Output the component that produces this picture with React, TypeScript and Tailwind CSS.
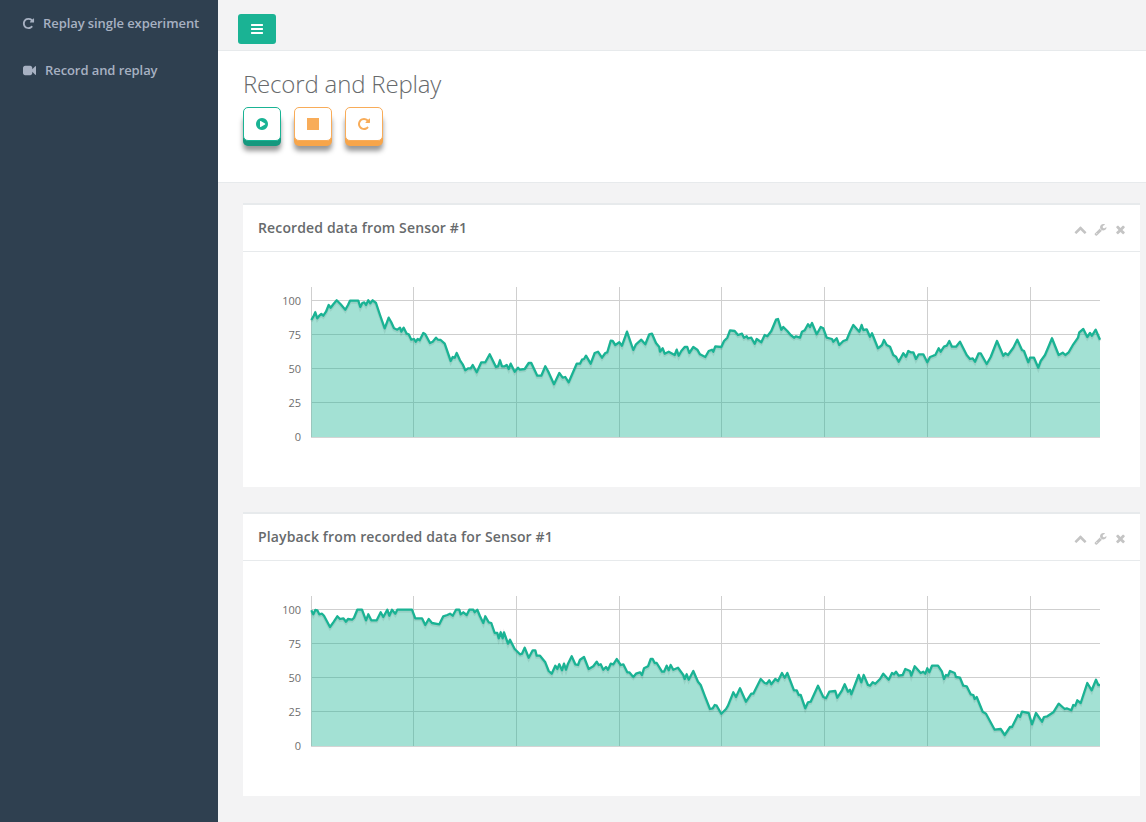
import type { ReactNode } from "react";

type Seg = { ox: number; oy: number; p: number[] };

const seg1: Seg[] = [
  { ox: 300, oy: 285, p: [34,105,40,95,46,82,52,100,58,92,64,87,70,92,78,80,86,60,92,68,100,58,110,46,122,58,136,74,144,60,150,47,175,47,181,66,187,54,193,52,198,60,205,46,211,55,218,46,228,54,240,90,254,130,266,98,274,112,282,130,292,134,300,128,304,140,311,128,320,146,326,148,334,164,342,162,347,170,353,162,359,166,370,144,376,148,390,174,398,170,408,158,414,164,422,165,434,176,452,228,458,216,464,218,470,204,480,226,488,238,496,256,504,250,512,250,518,240,530,262,544,232,556,232,569,208,588,246,594,244,600,226,606,244,614,244,620,240,626,252,632,236,644,260,654,248,660,254,674,252,686,234,694,234,712,272,724,272,736,244,744,258,762,298,778,264,788,278,796,276,806,292,830,236,840,236] },
  { ox: 570, oy: 285, p: [36,224,42,222,48,212,62,236,74,204,84,200,96,218,106,204,112,202,122,167,128,168,136,180,148,172,156,182,171,140,190,195,198,178,214,164,226,178,238,148,246,146,258,174,268,186,270,200,278,190,284,206,296,200,314,210,320,194,326,212,334,198,344,186,352,186,358,204,370,186,382,194,390,208,406,216,416,198,426,194,430,200,436,184,454,186,462,168,472,158,480,136,494,138,504,150,516,146,522,158,530,154,534,160,544,158,554,176,560,162,574,172,584,150,592,154,604,138,618,104,624,102,634,134,640,126,652,138,662,150,672,158,678,154,690,158,696,140,704,136,714,118,720,126,726,114,740,148,752,126,760,130,770,158,786,162,790,170,800,160,808,180,820,168,830,164,840,140] },
  { ox: 840, oy: 205, p: [40,360,58,380,65,360,70,375,80,373,90,395,96,385,114,430,126,420,132,405,140,420,150,425,160,450,168,455,176,470,190,445,198,455,205,438,212,442,220,442,228,462,236,448,250,448,262,472,270,456,280,452,286,450,296,430,302,440,312,425,320,422,328,408,336,425,348,425,360,410,380,450,390,462,398,460,405,470,416,445,422,445,440,477,452,456,471,408,490,452,496,445,504,450,520,428,532,404,546,435,552,438,565,472,570,458,582,458,595,488,602,468,615,450,626,424,636,400,656,450,668,443,676,450,686,442,700,418,714,398,718,382,730,372,742,396,750,384,756,392,767,374,780,404] },
];

const seg2: Seg[] = [
  { ox: 300, oy: 595, p: [34,46,40,58,46,45,52,46,58,58,66,56,72,62,90,96,100,82,112,64,120,72,130,70,138,80,144,72,156,74,162,68,172,44,186,44,198,76,205,58,214,76,230,76,242,52,250,66,262,44,268,62,276,44,286,56,292,44,336,44,346,70,366,70,376,90,386,72,396,84,418,88,430,64,442,60,450,56,458,62,468,44,478,44,482,58,490,52,500,60,508,44,520,44,524,52,532,44,540,64,550,84,556,64,566,82,574,84,584,114,592,114,596,130,602,112,608,130,612,112,624,146,630,134,644,162,660,178,666,176,674,158,686,188,698,166,706,166,710,182,720,182,736,202,746,228,755,236,766,212,772,222,778,208,786,226,792,206,798,224,804,206,815,184,826,208,834,210,840,194] },
  { ox: 570, oy: 595, p: [42,186,56,222,70,214,80,200,86,210,92,208,100,224,108,216,114,224,122,206,130,208,140,192,152,210,160,208,172,232,178,232,190,246,198,236,210,232,216,240,222,220,234,214,242,192,248,192,254,204,260,204,276,230,282,230,290,212,296,226,302,210,310,224,324,218,340,240,344,252,350,238,356,254,370,228,384,260,392,270,404,302,420,342,428,340,434,330,440,332,454,356,468,342,474,332,490,292,498,306,510,280,528,320,544,296,550,296,572,252,584,264,590,266,598,256,604,268,616,252,624,258,636,234,644,248,652,234,672,286,680,286,686,300,692,300,706,340,714,322,722,320,744,272,760,306,768,310,778,290,796,288,802,308,816,286,824,268,834,290,840,284] },
  { ox: 840, oy: 595, p: [34,298,56,240,64,262,71,240,84,270,90,272,98,262,106,266,120,252,130,236,146,254,156,234,162,238,168,230,176,242,188,240,196,222,210,228,214,242,224,214,242,234,250,230,256,236,262,220,268,232,276,212,294,212,306,230,312,252,318,240,324,242,330,228,344,234,348,246,360,248,370,272,380,274,392,298,400,300,404,312,410,306,428,350,438,356,464,404,482,402,494,420,510,396,516,396,534,360,540,366,546,350,566,354,576,388,588,354,606,380,612,366,622,364,640,352,656,326,674,342,680,340,694,346,700,330,706,332,712,316,722,324,742,264,755,286,768,254,775,270,780,270] },
];

const paths = {
  repeat:
    "M1664 256v448q0 26-19 45t-45 19h-448q-42 0-59-40-17-39 14-69l138-138q-148-137-349-137-104 0-198.5 40.5t-163.5 109.5-109.5 163.5-40.5 198.5 40.5 198.5 109.5 163.5 163.5 109.5 198.5 40.5q119 0 225-52t179-147q7-10 23-12 15 0 25 9l137 137q9 8 9.5 20.5t-7.5 22.5q-109 132-264 204.5t-327 72.5q-156 0-298-61t-245-164-164-245-61-298 61-298 164-245 245-164 298-61q147 0 284.5 55.5t244.5 156.5l130-129q29-31 70-14 39 17 39 59z",
  video:
    "M1792 352v1088q0 42-39 59-13 5-25 5-27 0-45-19l-403-403v166q0 119-84.5 203.5t-203.5 84.5h-704q-119 0-203.5-84.5t-84.5-203.5v-704q0-119 84.5-203.5t203.5-84.5h704q119 0 203.5 84.5t84.5 203.5v165l403-402q18-19 45-19 12 0 25 5 39 17 39 59z",
  bars:
    "M1664 1344v128q0 26-19 45t-45 19h-1408q-26 0-45-19t-19-45v-128q0-26 19-45t45-19h1408q26 0 45 19t19 45zm0-512v128q0 26-19 45t-45 19h-1408q-26 0-45-19t-19-45v-128q0-26 19-45t45-19h1408q26 0 45 19t19 45zm0-512v128q0 26-19 45t-45 19h-1408q-26 0-45-19t-19-45v-128q0-26 19-45t45-19h1408q26 0 45 19t19 45z",
  times:
    "M1490 1322q0 40-28 68l-136 136q-28 28-68 28t-68-28l-294-294-294 294q-28 28-68 28t-68-28l-136-136q-28-28-28-68t28-68l294-294-294-294q-28-28-28-68t28-68l136-136q28-28 68-28t68 28l294 294 294-294q28-28 68-28t68 28l136 136q28 28 28 68t-28 68l-294 294 294 294q28 28 28 68z",
  chevronUp:
    "M1683 1331l-166 165q-19 19-45 19t-45-19l-531-531-531 531q-19 19-45 19t-45-19l-166-165q-19-19-19-45.5t19-45.5l742-741q19-19 45-19t45 19l742 741q19 19 19 45.5t-19 45.5z",
  wrench:
    "M448 1472q0-26-19-45t-45-19-45 19-19 45 19 45 45 19 45-19 19-45zm644-420l-682 682q-37 37-90 37-52 0-91-37l-106-108q-38-36-38-90 0-53 38-91l681-681q39 98 114.5 173.5t173.5 114.5zm634-435q0 39-23 106-47 134-164.5 217.5t-258.5 83.5q-185 0-316.5-131.5t-131.5-316.5 131.5-316.5 316.5-131.5q58 0 121.5 16.5t107.5 46.5q16 11 16 28t-16 28l-293 169v224l193 107q5-3 79-48.5t135.5-81 70.5-35.5q15 0 23.5 10t8.5 25z",
  playCircle:
    "M896 128q209 0 385.5 103t279.5 279.5 103 385.5-103 385.5-279.5 279.5-385.5 103-385.5-103-279.5-279.5-103-385.5 103-385.5 279.5-279.5 385.5-103zm384 823q32-18 32-55t-32-55l-544-320q-31-19-64-1-32 19-32 56v640q0 37 32 56 16 8 32 8 17 0 32-9z",
};

function Icon({ d, className }: { d: string; className: string }) {
  return (
    <svg viewBox="0 0 1792 1792" fill="currentColor" className={className}>
      <path d={d} />
    </svg>
  );
}

function toPoints(segs: Seg[]): string {
  const out: string[] = [];
  segs.forEach((s) => {
    for (let i = 0; i < s.p.length; i += 2) {
      out.push(`${(s.ox + s.p[i] / 3).toFixed(1)},${(s.oy + s.p[i + 1] / 3).toFixed(1)}`);
    }
  });
  return out.join(" ");
}

const verticals = [311.5, 413.5, 516.5, 619.5, 721.5, 824.5, 927.5, 1030.5];
const labels = ["100", "75", "50", "25", "0"];

function Chart({ top, segs }: { top: number; segs: Seg[] }) {
  const pts = toPoints(segs);
  const base = top + 150;
  const horizontals = [13.5, 47.5, 81.5, 115.5].map((d) => top + d);
  return (
    <svg className="block w-full h-[235px] antialiased" viewBox={`243 ${top - 35} 897 235`}>
      {verticals.map((x) => (
        <line key={x} x1={x} x2={x} y1={top} y2={base} stroke="#cfcfcf" strokeWidth="1" />
      ))}
      {horizontals.map((y) => (
        <line key={y} x1={311} x2={1100} y1={y} y2={y} stroke="#cfcfcf" strokeWidth="1" />
      ))}
      <line x1={311} x2={1100} y1={base + 0.5} y2={base + 0.5} stroke="#d4d4d4" strokeWidth="1" />
      {labels.map((l, i) => (
        <text key={l} x={301} y={top + 18 + i * 34} textAnchor="end" fontSize="11" fill="#6e6e6e">
          {l}
        </text>
      ))}
      <polygon points={`311.3,${base} ${pts} 1100,${base}`} fill="#1ab394" fillOpacity="0.4" />
      <polyline points={pts} transform="translate(0 1.5)" fill="none" stroke="#000" strokeOpacity="0.07" strokeWidth="3" />
      <polyline points={pts} fill="none" stroke="#1ab394" strokeWidth="2.3" strokeLinejoin="round" />
    </svg>
  );
}

function Panel({ title, top, segs }: { title: string; top: number; segs: Seg[] }) {
  return (
    <section className="bg-white border-t-2 border-[#e7eaec]">
      <div className="h-[46px] border-b border-[#e7eaec] flex items-center justify-between pl-[15px] pr-[13px] box-content">
        <h5 className="text-[14px] font-semibold text-[#676a6c] tracking-[0.14px] pb-[2px] antialiased">{title}</h5>
        <div className="flex items-center gap-[7px] text-[#c4c4c4] pt-[3px]">
          <Icon d={paths.chevronUp} className="w-[13px] h-[13px]" />
          <Icon d={paths.wrench} className="w-[13px] h-[13px]" />
          <Icon d={paths.times} className="w-[13px] h-[13px]" />
        </div>
      </div>
      <Chart top={top} segs={segs} />
    </section>
  );
}

function DimButton({ children, kind }: { children: ReactNode; kind: "primary" | "warning" }) {
  const cls =
    kind === "primary"
      ? "border-[#1ab394] text-[#1ab394] shadow-[0_5px_0_0_#16987e,0_10px_5px_#999]"
      : "border-[#f8ac59] text-[#f8ac59] shadow-[0_5px_0_0_#f7a54a,0_10px_5px_#999]";
  return (
    <button className={`w-[38px] h-[34px] rounded-[5px] border bg-white flex items-center justify-center ${cls}`}>
      {children}
    </button>
  );
}

export default function App() {
  return (
    <div className="flex h-[822px] overflow-hidden bg-[#f3f3f4] text-[#676a6c] font-['Open_Sans',sans-serif]">
      <aside className="w-[218px] shrink-0 bg-[#2f4050] text-[#a7b1c2] text-[13px] font-semibold leading-[19px] tracking-[-0.08px] antialiased">
        <a className="flex items-center pl-[22px] py-[14px]">
          <Icon d={paths.repeat} className="w-[13px] h-[13px] mr-[8px]" />
          Replay single experiment
        </a>
        <a className="flex items-center pl-[23px] py-[14px]">
          <Icon d={paths.video} className="w-[13px] h-[13px] mr-[9px]" />
          Record and replay
        </a>
      </aside>
      <main className="flex-1 min-w-0">
        <div className="h-[51px] border-b border-[#e7eaec] pl-[20px] pt-[14px]">
          <button className="w-[38px] h-[30px] rounded-[3px] bg-[#1ab394] text-white flex items-center justify-center">
            <Icon d={paths.bars} className="w-[14px] h-[14px]" />
          </button>
        </div>
        <div className="bg-white h-[132px] border-b border-[#e7eaec] pl-[25px] pt-[17px]">
          <h2 className="text-[24px] font-light leading-[32px] tracking-[-0.17px] text-[#676a6c]">Record and Replay</h2>
          <div className="flex gap-[13px] mt-[7px]">
            <DimButton kind="primary">
              <Icon d={paths.playCircle} className="w-[14px] h-[14px]" />
            </DimButton>
            <DimButton kind="warning">
              <div className="w-[12px] h-[12px] bg-[#f8ac59]" />
            </DimButton>
            <DimButton kind="warning">
              <Icon d={paths.repeat} className="w-[14px] h-[14px]" />
            </DimButton>
          </div>
        </div>
        <div className="pl-[25px] pr-[6px] pt-[20px] flex flex-col gap-[25px]">
          <Panel title="Recorded data from Sensor #1" top={287} segs={seg1} />
          <Panel title="Playback from recorded data for Sensor #1" top={596} segs={seg2} />
        </div>
      </main>
    </div>
  );
}
